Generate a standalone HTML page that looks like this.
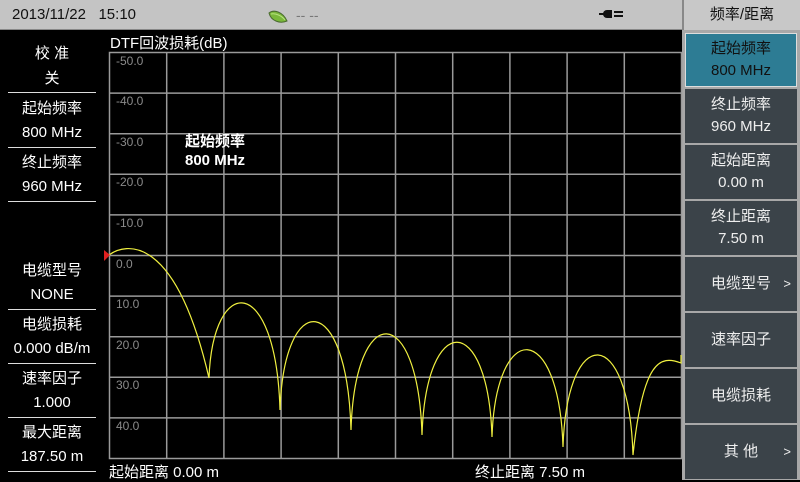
<!DOCTYPE html>
<html><head><meta charset="utf-8"><style>
*{margin:0;padding:0;box-sizing:border-box}
body{width:800px;height:480px;background:#000;position:relative;overflow:hidden;font-family:"Liberation Sans","Noto Sans CJK SC",sans-serif;color:#fff}
.abs{position:absolute}
.top{left:0;top:0;width:682px;height:30px;background:#c4c4c4;border-bottom:1px solid #888}
.title{left:682px;top:0;width:118px;height:30px;background:#c8c8c8;border-left:2px solid #888;color:#111;font-size:15px;text-align:center;line-height:30px}
.panel{left:682px;top:30px;width:118px;height:450px;background:#a8a8a8}
.btn{position:absolute;left:3px;width:112px;height:54px;background:#3b4349;color:#eee;font-size:15px;text-align:center;display:flex;flex-direction:column;justify-content:center;line-height:22px}
.lt{position:absolute;left:0;width:104px;text-align:center;font-size:15px;line-height:24px}
.ln{position:absolute;left:8px;width:88px;height:1px;background:#ddd}
.yl{position:absolute;left:116px;font-size:12px;color:#8a8a8a}
</style></head><body>
<div class="abs top"></div>
<div class="abs" style="left:12px;top:6px;font-size:15px;color:#111">2013/11/22&nbsp;&nbsp;&nbsp;15:10</div>
<svg class="abs" style="left:266px;top:7px" width="24" height="20"><path d="M3,6 C8,2 17,5 21,14 C14,17 5,14 3,6Z" fill="#7ab83a" stroke="#4a6a30"/><path d="M5,7 C10,6 16,9 19,13" stroke="#b8e080" fill="none"/></svg>
<div class="abs" style="left:296px;top:7px;font-size:14px;color:#777">-- --</div>
<svg class="abs" style="left:598px;top:7px" width="30" height="14"><rect x="1" y="6" width="5" height="2" fill="#111"/><path d="M9,3 A4,4 0 0 0 9,11 L14,11 L14,3Z" fill="#111"/><rect x="16" y="4" width="9" height="2" fill="#111"/><rect x="16" y="8" width="9" height="2" fill="#111"/></svg>
<div class="abs title">频率/距离</div>
<div class="abs panel">
<div class="btn" style="top:3px;background:#2d7c94;color:#111;border:1px solid #ddd">起始频率<br>800 MHz</div>
<div class="btn" style="top:59px">终止频率<br>960 MHz</div>
<div class="btn" style="top:115px">起始距离<br>0.00 m</div>
<div class="btn" style="top:171px">终止距离<br>7.50 m</div>
<div class="btn" style="top:227px">电缆型号<span style="position:absolute;right:6px;top:16px;font-size:13px">&gt;</span></div>
<div class="btn" style="top:283px">速率因子</div>
<div class="btn" style="top:339px">电缆损耗</div>
<div class="btn" style="top:395px">其 他<span style="position:absolute;right:6px;top:16px;font-size:13px">&gt;</span></div>
</div>
<div class="lt" style="top:42px">校 准</div><div class="lt" style="top:67px">关</div><div class="ln" style="top:92px"></div>
<div class="lt" style="top:97px">起始频率</div><div class="lt" style="top:121px">800 MHz</div><div class="ln" style="top:147px"></div>
<div class="lt" style="top:151px">终止频率</div><div class="lt" style="top:175px">960 MHz</div><div class="ln" style="top:201px"></div>
<div class="lt" style="top:259px">电缆型号</div><div class="lt" style="top:283px">NONE</div><div class="ln" style="top:309px"></div>
<div class="lt" style="top:313px">电缆损耗</div><div class="lt" style="top:337px">0.000 dB/m</div><div class="ln" style="top:363px"></div>
<div class="lt" style="top:367px">速率因子</div><div class="lt" style="top:391px">1.000</div><div class="ln" style="top:417px"></div>
<div class="lt" style="top:421px">最大距离</div><div class="lt" style="top:445px">187.50 m</div><div class="ln" style="top:471px"></div>
<div class="abs" style="left:110px;top:32px;font-size:15px">DTF回波损耗(dB)</div>
<svg class="abs" style="left:0;top:0" width="800" height="480">
<g stroke="#9a9a9a" stroke-width="1.5" fill="none">
<rect x="109.5" y="52.5" width="572" height="406"/>
<path d="M166.7 52V458M223.9 52V458M281.1 52V458M338.3 52V458M395.5 52V458M452.7 52V458M509.9 52V458M567.1 52V458M624.3 52V458M109 93.1H681M109 133.7H681M109 174.3H681M109 214.9H681M109 255.5H681M109 296.1H681M109 336.7H681M109 377.3H681M109 417.9H681"/>
</g>
<path fill="none" stroke="#f0f040" stroke-width="1.2" d="M109,255 C125,243 175,232 209,378 C213,273 276,273 280,410 C284,289 347,289 351,430 C355,301 418,301 422,435 C426,311 488,311 492,437 C496,319 559,319 563,447 C567,323 629,323 633,455 C643,360 660,355 681,363 L681,355"/>
<path d="M104,250 L110,255 L104,261Z" fill="#e02020"/>
</svg>
<div class="yl" style="top:54px">-50.0</div><div class="yl" style="top:94px">-40.0</div><div class="yl" style="top:135px">-30.0</div><div class="yl" style="top:175px">-20.0</div><div class="yl" style="top:216px">-10.0</div><div class="yl" style="top:257px">0.0</div><div class="yl" style="top:297px">10.0</div><div class="yl" style="top:338px">20.0</div><div class="yl" style="top:378px">30.0</div><div class="yl" style="top:419px">40.0</div>
<div class="abs" style="left:185px;top:132px;font-size:15px;font-weight:bold;line-height:19px">起始频率<br>800 MHz</div>
<div class="abs" style="left:109px;top:461px;font-size:15px">起始距离 0.00 m</div>
<div class="abs" style="left:475px;top:461px;font-size:15px">终止距离 7.50 m</div>
</body></html>
